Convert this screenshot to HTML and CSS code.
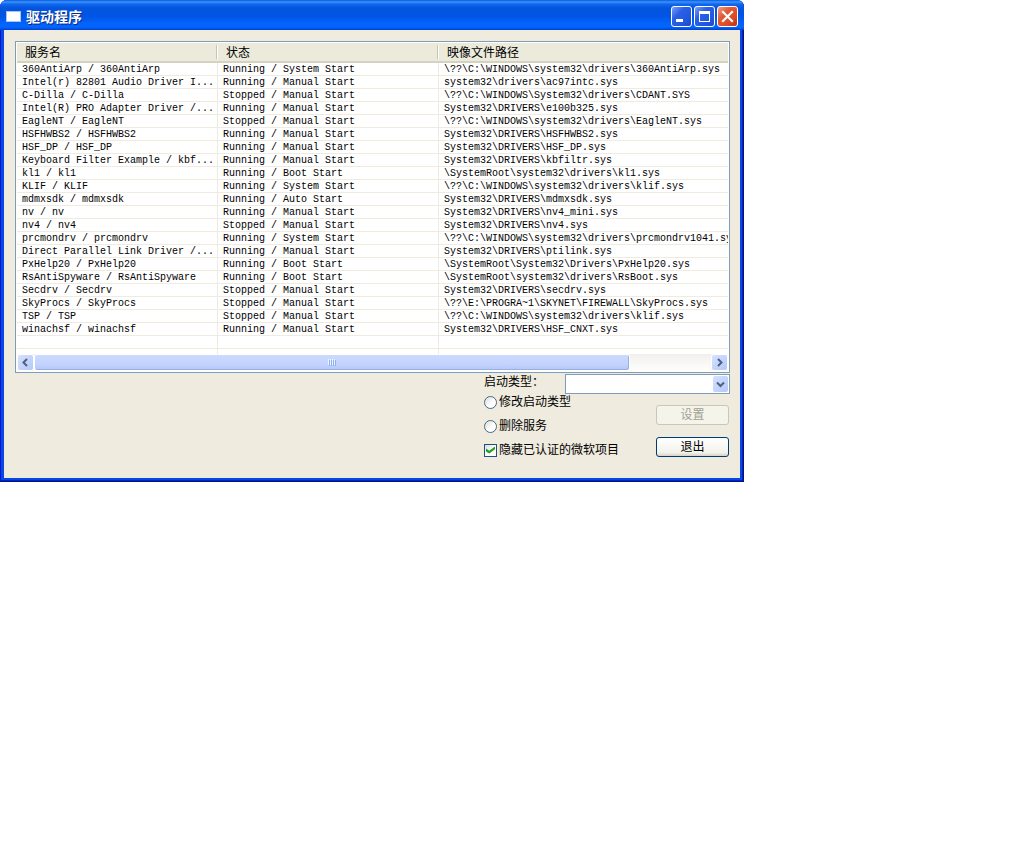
FILE: index.html
```
<!DOCTYPE html>
<html lang="zh-CN">

<head>
	<meta charset="UTF-8">
	<title>驱动程序</title>
	<link rel="stylesheet" href="styles.css">
</head>

<body>
	<div class="window">
		<!--title bar-->
		<header class="titlebar">
			<span class="appicon"></span>
			<h1 class="title">驱动程序</h1>
			<button type="button" class="winbtn" aria-label="最小化">
				<svg width="19" height="19" viewBox="0 0 19 19"><path d="M4 12h7v3H4z" fill="#fff"/></svg>
			</button>
			<button type="button" class="winbtn" aria-label="最大化">
				<svg width="19" height="19" viewBox="0 0 19 19"><path d="M4 4h11v11H4zM5 7v7h9V7z" fill="#fff" fill-rule="evenodd"/></svg>
			</button>
			<button type="button" class="winbtn close" aria-label="关闭">
				<svg width="19" height="19" viewBox="0 0 19 19"><path d="M5 5l9 9M14 5l-9 9" stroke="#fff" stroke-width="2.2" stroke-linecap="square"/></svg>
			</button>
		</header>

		<main class="content">
			<!--driver list-->
			<div class="listview">
				<div class="rows">
					<table class="drivers">
						<colgroup>
							<col class="col-name">
							<col class="col-state">
							<col class="col-path">
						</colgroup>
						<thead>
							<tr><th>服务名</th><th>状态</th><th>映像文件路径</th></tr>
						</thead>
						<tbody>
							<tr><td>360AntiArp / 360AntiArp</td><td>Running / System Start</td><td>\??\C:\WINDOWS\system32\drivers\360AntiArp.sys</td></tr>
							<tr><td>Intel(r) 82801 Audio Driver I...</td><td>Running / Manual Start</td><td>system32\drivers\ac97intc.sys</td></tr>
							<tr><td>C-Dilla / C-Dilla</td><td>Stopped / Manual Start</td><td>\??\C:\WINDOWS\System32\drivers\CDANT.SYS</td></tr>
							<tr><td>Intel(R) PRO Adapter Driver /...</td><td>Running / Manual Start</td><td>System32\DRIVERS\e100b325.sys</td></tr>
							<tr><td>EagleNT / EagleNT</td><td>Stopped / Manual Start</td><td>\??\C:\WINDOWS\system32\drivers\EagleNT.sys</td></tr>
							<tr><td>HSFHWBS2 / HSFHWBS2</td><td>Running / Manual Start</td><td>System32\DRIVERS\HSFHWBS2.sys</td></tr>
							<tr><td>HSF_DP / HSF_DP</td><td>Running / Manual Start</td><td>System32\DRIVERS\HSF_DP.sys</td></tr>
							<tr><td>Keyboard Filter Example / kbf...</td><td>Running / Manual Start</td><td>System32\DRIVERS\kbfiltr.sys</td></tr>
							<tr><td>kl1 / kl1</td><td>Running / Boot Start</td><td>\SystemRoot\system32\drivers\kl1.sys</td></tr>
							<tr><td>KLIF / KLIF</td><td>Running / System Start</td><td>\??\C:\WINDOWS\system32\drivers\klif.sys</td></tr>
							<tr><td>mdmxsdk / mdmxsdk</td><td>Running / Auto Start</td><td>System32\DRIVERS\mdmxsdk.sys</td></tr>
							<tr><td>nv / nv</td><td>Running / Manual Start</td><td>System32\DRIVERS\nv4_mini.sys</td></tr>
							<tr><td>nv4 / nv4</td><td>Stopped / Manual Start</td><td>System32\DRIVERS\nv4.sys</td></tr>
							<tr><td>prcmondrv / prcmondrv</td><td>Running / System Start</td><td>\??\C:\WINDOWS\system32\drivers\prcmondrv1041.sys</td></tr>
							<tr><td>Direct Parallel Link Driver /...</td><td>Running / Manual Start</td><td>System32\DRIVERS\ptilink.sys</td></tr>
							<tr><td>PxHelp20 / PxHelp20</td><td>Running / Boot Start</td><td>\SystemRoot\System32\Drivers\PxHelp20.sys</td></tr>
							<tr><td>RsAntiSpyware / RsAntiSpyware</td><td>Running / Boot Start</td><td>\SystemRoot\system32\drivers\RsBoot.sys</td></tr>
							<tr><td>Secdrv / Secdrv</td><td>Stopped / Manual Start</td><td>System32\DRIVERS\secdrv.sys</td></tr>
							<tr><td>SkyProcs / SkyProcs</td><td>Stopped / Manual Start</td><td>\??\E:\PROGRA~1\SKYNET\FIREWALL\SkyProcs.sys</td></tr>
							<tr><td>TSP / TSP</td><td>Stopped / Manual Start</td><td>\??\C:\WINDOWS\system32\drivers\klif.sys</td></tr>
							<tr><td>winachsf / winachsf</td><td>Running / Manual Start</td><td>System32\DRIVERS\HSF_CNXT.sys</td></tr>
							<tr><td></td><td></td><td></td></tr>
							<tr class="last"><td></td><td></td><td></td></tr>
						</tbody>
					</table>
				</div>
				<!--horizontal scrollbar-->
				<div class="scrollbar">
					<button type="button" class="arrow" aria-label="向左">
						<svg width="9" height="9" viewBox="0 0 9 9"><path d="M6 1L2.500 4.500L6 8" fill="none" stroke="#4d6185" stroke-width="2"/></svg>
					</button>
					<div class="track">
						<div class="thumb">
							<svg width="8" height="7" viewBox="0 0 8 7" shape-rendering="crispEdges"><path d="M0 0h1v6H0zM2 0h1v6H2zM4 0h1v6H4zM6 0h1v6H6z" fill="#eef4fe"/><path d="M1 1h1v6H1zM3 1h1v6H3zM5 1h1v6H5zM7 1h1v6H7z" fill="#8cb0f8"/></svg>
						</div>
					</div>
					<button type="button" class="arrow" aria-label="向右">
						<svg width="9" height="9" viewBox="0 0 9 9"><path d="M3 1L6.500 4.500L3 8" fill="none" stroke="#4d6185" stroke-width="2"/></svg>
					</button>
				</div>
			</div>

			<!--options below the list-->
			<form class="options">
				<div class="type-row">
					<label for="startType">启动类型：</label>
					<div class="combo">
						<select id="startType"><option value=""></option></select>
						<span class="drop"><svg width="9" height="9" viewBox="0 0 9 9"><path d="M1 2.500L4.500 6L8 2.500" fill="none" stroke="#4d6185" stroke-width="2"/></svg></span>
					</div>
				</div>
				<div class="action-row">
					<div class="choices">
						<label><input type="radio" name="action" value="modify">修改启动类型</label>
						<label><input type="radio" name="action" value="delete">删除服务</label>
						<label><input type="checkbox" name="hide" checked>隐藏已认证的微软项目</label>
					</div>
					<div class="buttons">
						<button type="button" class="btn" disabled>设置</button>
						<button type="button" class="btn">退出</button>
					</div>
				</div>
			</form>
		</main>
	</div>
</body>

</html>
```

FILE: styles.css
```
* {
	box-sizing: border-box;
}
body {
	margin: 0;
	background-color: #fff;
	color: #000;
	font: 12px/14px "Liberation Sans", "Noto Sans CJK SC", sans-serif;
}
button, select, input {
	margin: 0;
	padding: 0;
	font: inherit;
}

.window {
	max-width: 744px;
	padding: 0 4px 4px;
	border-radius: 7px 7px 0 0;
	background-color: #0a46e4;
	box-shadow: inset 1px 0 #0019cf, inset -1px -1px #00138c, inset -2px -2px #0226b4;
}

/*title bar*/
.titlebar {
	display: flex;
	align-items: center;
	gap: 2px;
	height: 30px;
	margin: 0 -4px;
	padding: 3px 6px 0;
	border-radius: 7px 7px 0 0;
	background: linear-gradient(#0a5ad8 0, #3a93ff 2px, #1268ee 4px, #0355dd 8px, #0054e3 16px, #0261f8 22px, #0466ff 27px, #0050e0 29px, #003dd7 30px);
}
.appicon {
	width: 15px;
	height: 11px;
	border: 1px solid #a9c4ee;
	background-color: #fff;
}
.title {
	flex: 1;
	margin: 0 0 0 3px;
	color: #fff;
	font-size: 14px;
	line-height: 20px;
	text-shadow: 1px 1px #0a2a80;
}
.winbtn {
	width: 21px;
	height: 21px;
	border: 1px solid #fff;
	border-radius: 3px;
	background: linear-gradient(135deg, #7d9ff5, #2a5fe6 35%, #2257e0 70%, #1f49c4);
}
.winbtn svg {
	display: block;
}
.winbtn.close {
	background: linear-gradient(135deg, #f0a088, #e35a35 35%, #dd4a25 70%, #b93212);
}

.content {
	padding: 11px 10px 20px 11px;
	background-color: #efebde;
}

/*driver list*/
.listview {
	padding: 1px;
	border: 1px solid #7f9db9;
	background-color: #fff;
}
.rows {
	overflow: hidden;
}
.drivers {
	width: 100%;
	min-width: 810px;
	table-layout: fixed;
	border-collapse: separate;
	border-spacing: 0;
}
.col-name {
	width: 201px;
}
.col-state {
	width: 221px;
}
.drivers th {
	height: 20px;
	padding: 2px 8px 0;
	border-bottom: 2px solid #d6d2c2;
	background-color: #ebeadb;
	font-weight: normal;
	line-height: 16px;
	text-align: left;
}
.drivers th:not(:last-child) {
	background: linear-gradient(#c7c5b2, #c7c5b2) right 1px center / 1px 14px no-repeat, linear-gradient(#fff, #fff) right center / 1px 14px no-repeat, #ebeadb;
}
.drivers td {
	height: 13px;
	padding: 2px 0 0 5px;
	border-right: 1px solid #efebde;
	border-bottom: 1px solid #efebde;
	font: 10px/10px "Liberation Mono", "Noto Sans CJK SC", monospace;
	white-space: nowrap;
}
.drivers .last td {
	height: 5px;
	border-bottom: 0;
}

/*scrollbar*/
.scrollbar {
	display: flex;
	height: 17px;
	background-color: #f5f4f0;
}
.arrow, .drop {
	display: flex;
	align-items: center;
	justify-content: center;
	width: 17px;
	border: 1px solid #fff;
	border-radius: 3px;
	background: linear-gradient(135deg, #d6e1ff, #b4c8f8);
}
.track {
	flex: 1;
	background: linear-gradient(#f1f0ec, #fefefc);
}
.thumb {
	display: flex;
	align-items: center;
	justify-content: center;
	width: 88%;
	height: 17px;
	border: 1px solid #fff;
	border-radius: 3px;
	background: linear-gradient(#cbdaff, #c3d3fd 60%, #b3c8f8);
	box-shadow: inset -1px -1px #98b0e0;
}

/*options*/
.options {
	width: 246px;
	margin-left: auto;
}
.type-row {
	display: flex;
	justify-content: space-between;
	padding-top: 1px;
}
.type-row label { /*the TC face centres the full-width colon*/
	font-family: "Noto Sans CJK TC", sans-serif;
	line-height: 14px;
}
.combo {
	position: relative;
	width: 165px;
	height: 20px;
}
.combo select {
	appearance: none;
	width: 100%;
	height: 100%;
	border: 1px solid #7f9db9;
	border-radius: 0;
	background-color: #fff;
}
.drop { /*sits over the select*/
	position: absolute;
	top: 1px;
	right: 1px;
	bottom: 1px;
	pointer-events: none;
}
.action-row {
	display: flex;
	justify-content: space-between;
}
.choices {
	display: flex;
	flex-direction: column;
	gap: 8px;
}
.choices label {
	display: flex;
	align-items: center;
	gap: 2px;
	height: 16px;
}
.choices input {
	appearance: none;
	display: grid;
	place-items: center;
	width: 13px;
	height: 13px;
	border: 1px solid #1d5281;
	background: linear-gradient(135deg, #dcdcd7, #fff 60%);
}
.choices input[type=radio] {
	border-color: #47698c;
	border-radius: 50%;
}
.choices input:checked::before {
	content: "";
	width: 9px;
	height: 7px;
	background-color: #21a121;
	clip-path: polygon(0 29%, 36% 62%, 100% 0, 100% 40%, 36% 100%, 0 70%);
}
.choices input[type=radio]:checked::before {
	clip-path: circle(40%);
}
.buttons {
	display: flex;
	flex-direction: column;
	gap: 12px;
	padding: 11px 1px 0 0;
}
.btn {
	width: 73px;
	height: 20px;
	border: 1px solid #003c74;
	border-radius: 3px;
	background: linear-gradient(#fff, #f3f2ec 80%, #d8d2c4);
	color: #000;
	line-height: 16px;
}
.btn:disabled {
	border-color: #c9c7ba;
	background: #f5f4ea;
	color: #a1a192;
}
```
